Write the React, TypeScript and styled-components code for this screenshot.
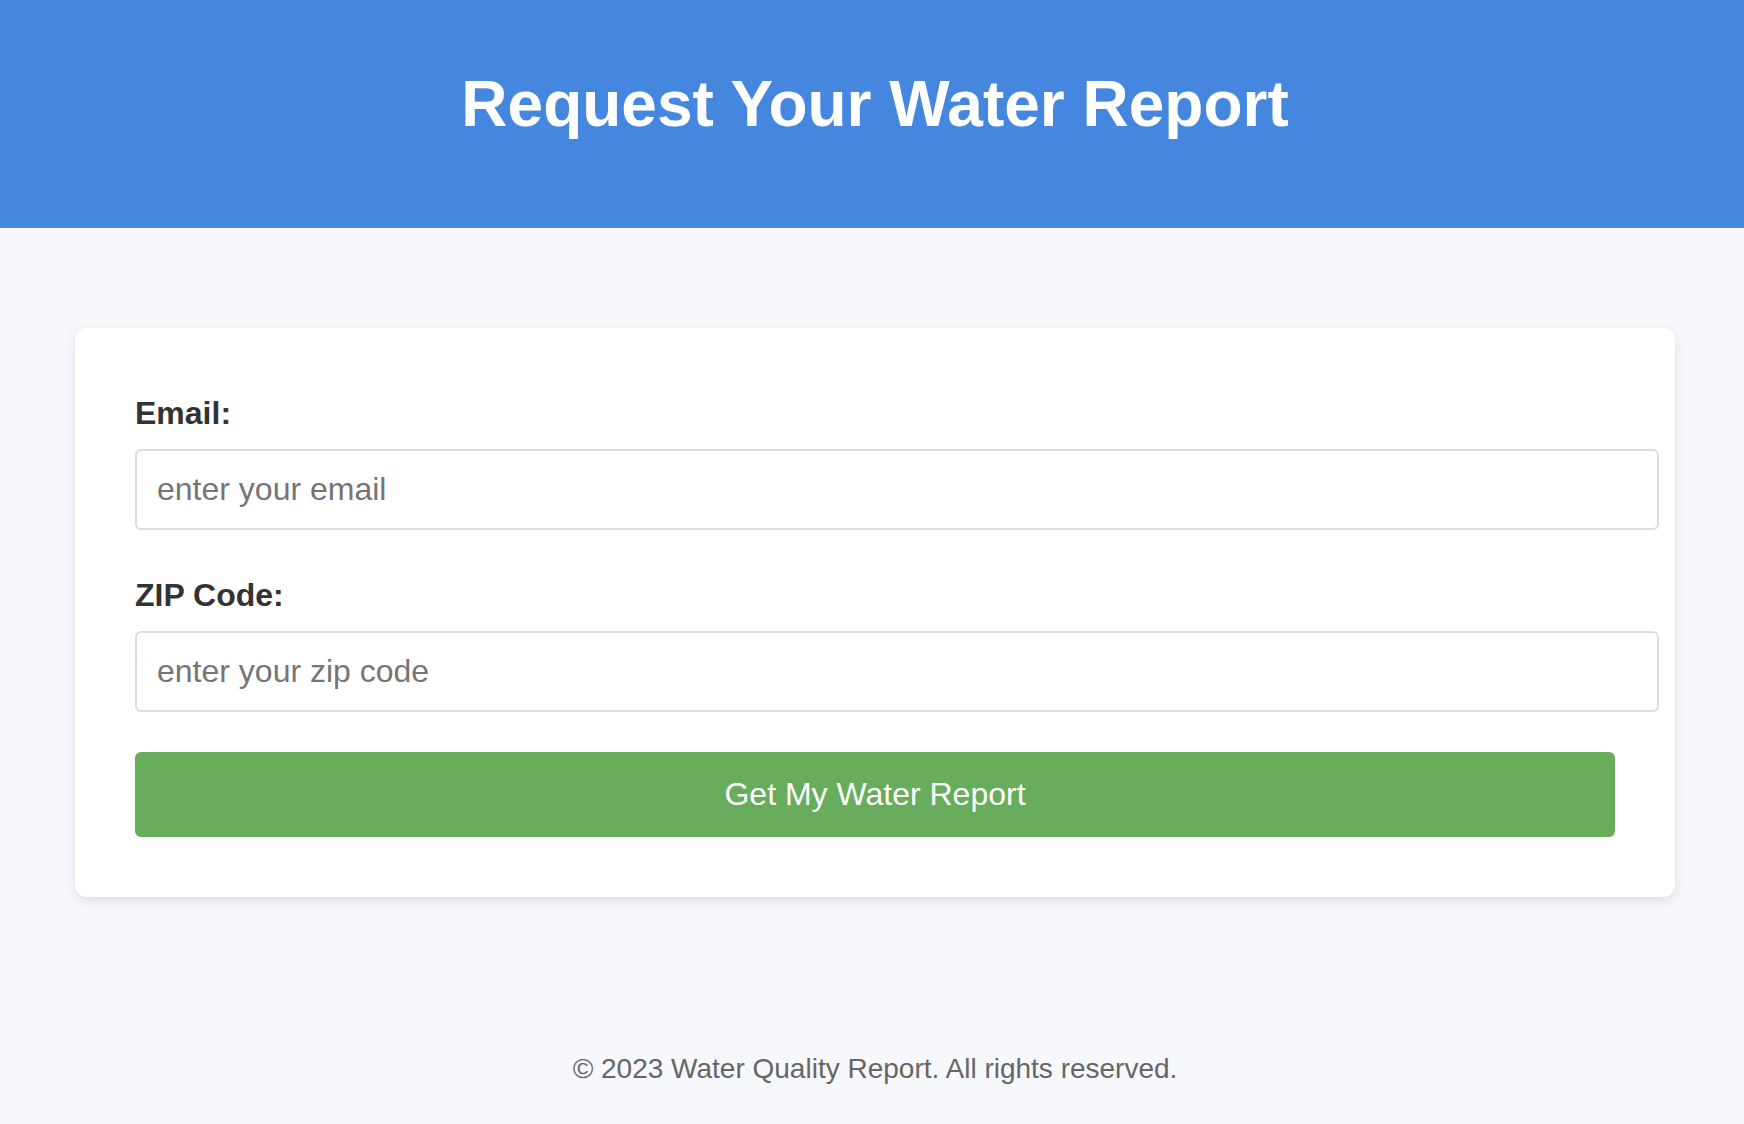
import React from "react";
import styled, { createGlobalStyle } from "styled-components";

const GlobalStyle = createGlobalStyle`
  html, body {
    margin: 0;
    padding: 0;
  }
  body {
    background: #f7f8fc;
    font-family: "Liberation Sans", Arial, sans-serif;
    line-height: 1.6;
    color: #333333;
  }
  * {
    box-sizing: content-box;
  }
`;

const Page = styled.div`
  display: flex;
  flex-direction: column;
  min-height: 1120px;
`;

const Header = styled.header`
  background: #4587de;
  color: #ffffff;
  text-align: center;
  padding: 53px 0 73px 6px;
  height: 102px;
`;

const Title = styled.h1`
  margin: 0;
  font-size: 64px;
  font-weight: 700;
  line-height: 102px;
`;

const Main = styled.main`
  padding: 100px 69px 100px 75px;
`;

const Card = styled.div`
  background: #ffffff;
  border-radius: 12px;
  box-shadow: 0 4px 12px rgba(0, 0, 0, 0.1);
  padding: 60px;
`;

const Form = styled.form`
  display: flex;
  flex-direction: column;
`;

const Group = styled.div`
  display: flex;
  flex-direction: column;
  align-items: flex-start;
  margin-bottom: 40px;
`;

const Label = styled.label`
  display: block;
  font-size: 32px;
  font-weight: 700;
  line-height: 51px;
  color: #333333;
  margin-bottom: 10px;
`;

const Input = styled.input`
  width: 1480px;
  padding: 20px;
  border: 2px solid #dddddd;
  border-radius: 6px;
  font-family: "Liberation Sans", Arial, sans-serif;
  font-size: 32px;
  line-height: normal;
  color: #333333;
  background: #ffffff;
  outline: none;
  margin: 0;

  &::placeholder {
    color: #757575;
  }
`;

const Button = styled.button`
  box-sizing: border-box;
  width: 100%;
  padding: 24px;
  border: none;
  border-radius: 6px;
  background: #68ad5c;
  color: #ffffff;
  font-family: "Liberation Sans", Arial, sans-serif;
  font-size: 32px;
  line-height: normal;
  cursor: pointer;
  margin: 0;
`;

const Footer = styled.footer`
  text-align: center;
  padding: 50px 0 27px 6px;
  font-size: 28px;
  color: #666666;
`;

export default function App() {
  return (
    <>
      <GlobalStyle />
      <Page>
        <Header>
          <Title>Request Your Water Report</Title>
        </Header>
        <Main>
          <Card>
            <Form onSubmit={(e) => e.preventDefault()}>
              <Group>
                <Label htmlFor="email">Email:</Label>
                <Input id="email" type="email" placeholder="enter your email" />
              </Group>
              <Group>
                <Label htmlFor="zip">ZIP Code:</Label>
                <Input id="zip" type="text" placeholder="enter your zip code" />
              </Group>
              <Button type="submit">Get My Water Report</Button>
            </Form>
          </Card>
        </Main>
        <Footer>© 2023 Water Quality Report. All rights reserved.</Footer>
      </Page>
    </>
  );
}
